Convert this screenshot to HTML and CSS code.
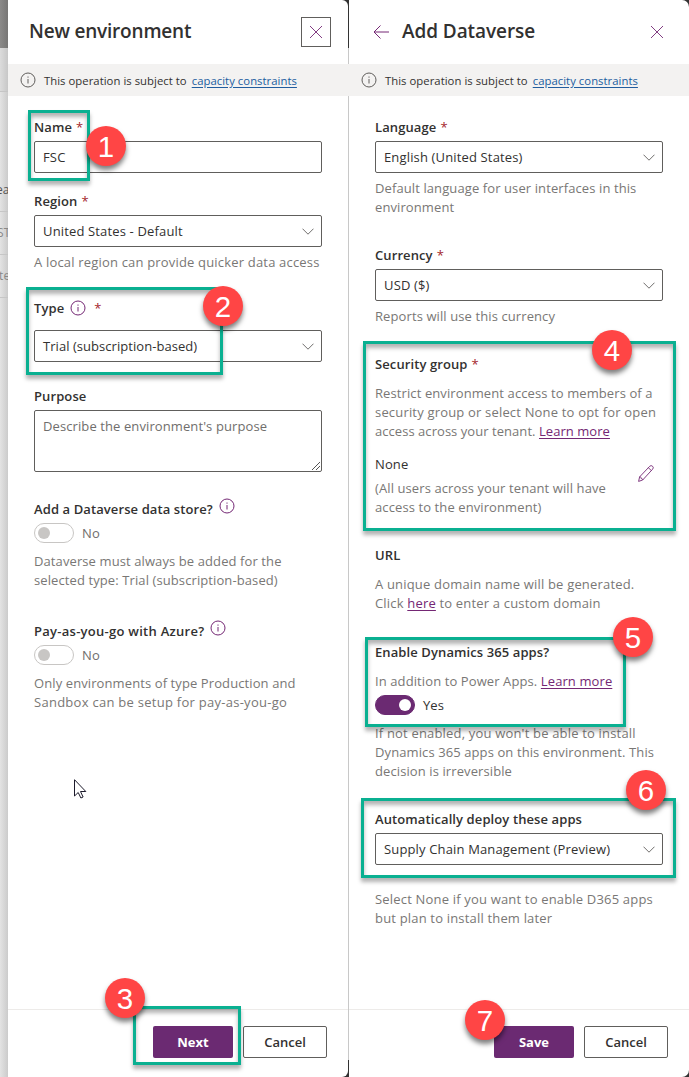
FILE: index.html
```
<!DOCTYPE html>
<html lang="en">
<head>
<meta charset="utf-8">
<title>New environment</title>
<link rel="stylesheet" href="styles.css">
</head>
<body>
<svg class="defs" width="0" height="0">
  <symbol id="info" viewBox="0 0 16 16"><circle cx="8" cy="8" r="7" fill="none" stroke="currentColor"/><path d="M8 7v4.500M8 4.500v1.200" stroke="currentColor" fill="none"/></symbol>
  <symbol id="close" viewBox="0 0 14 14"><path d="M1 1l12 12M13 1L1 13" stroke="currentColor" stroke-width=".9" fill="none"/></symbol>
  <symbol id="chev" viewBox="0 0 12 7"><path d="M.5.7L6 6.2 11.5.7" stroke="currentColor" stroke-width=".9" fill="none"/></symbol>
</svg>
<div class="screen">
  <aside class="backdrop">
    <div class="topbar"></div>
    <div class="toolbar"></div>
    <div class="rows"><span class="row first">ea</span><span class="row">ST</span><span class="row last">te</span></div>
  </aside>

  <section class="panel left">
    <header class="head">
      <h1 class="title new">New environment</h1>
      <button class="close boxed"><svg width="14" height="14"><use href="#close"/></svg></button>
    </header>
    <div class="notice"><svg width="16" height="16"><use href="#info"/></svg><span class="notice-text">This operation is subject to</span><a class="capacity">capacity constraints</a></div>
    <main class="form">
      <div class="label">Name <i class="req">*</i></div>
      <div class="field"><span>FSC</span></div>
      <div class="label region">Region <i class="req">*</i></div>
      <div class="field"><span>United States - Default</span><svg width="12" height="7"><use href="#chev"/></svg></div>
      <p class="hint h-local wide">A local region can provide quicker data access</p>
      <div class="label type">Type <svg class="info" width="16" height="16"><use href="#info"/></svg><i class="req far">*</i></div>
      <div class="field"><span class="snug">Trial (subscription-based)</span><svg width="12" height="7"><use href="#chev"/></svg></div>
      <div class="label purpose">Purpose</div>
      <div class="area"><span>Describe the environment's purpose</span><svg class="grip" width="8" height="8"><path d="M0 8L8 0M4 8l4-4" stroke="#555" fill="none"/></svg></div>
      <div class="label store"><span>Add a Dataverse data store?</span><svg class="info up" width="16" height="16"><use href="#info"/></svg></div>
      <div class="toggle-row"><span class="toggle"></span><span class="off-text">No</span></div>
      <p class="hint after-toggle">Dataverse must always be added for the<br>selected type: Trial (subscription-based)</p>
      <div class="label azure"><span class="loose">Pay-as-you-go with Azure?</span><svg class="info up" width="16" height="16"><use href="#info"/></svg></div>
      <div class="toggle-row"><span class="toggle"></span><span class="off-text">No</span></div>
      <p class="hint after-toggle">Only environments of type Production and<br><span class="loose">Sandbox can be setup for pay-as-you-go</span></p>
    </main>
    <footer class="foot"><button class="btn primary">Next</button><button class="btn">Cancel</button></footer>
  </section>

  <section class="panel right">
    <header class="head">
      <svg class="back" width="16" height="14" viewBox="0 0 16 14"><path d="M16 7H1M7.500.5L1 7l6.500 6.500" stroke="currentColor" fill="none"/></svg>
      <h1 class="title add">Add Dataverse</h1>
      <button class="close"><svg width="14" height="14"><use href="#close"/></svg></button>
    </header>
    <div class="notice"><svg width="16" height="16"><use href="#info"/></svg><span class="notice-text">This operation is subject to</span><a class="capacity">capacity constraints</a></div>
    <main class="form">
      <div class="label">Language <i class="req">*</i></div>
      <div class="field"><span>English (United States)</span><svg width="12" height="7"><use href="#chev"/></svg></div>
      <p class="hint h-lang">Default language for user interfaces in this<br>environment</p>
      <div class="label currency">Currency <i class="req">*</i></div>
      <div class="field"><span>USD ($)</span><svg width="12" height="7"><use href="#chev"/></svg></div>
      <p class="hint h-lang">Reports will use this currency</p>
      <div class="label security">Security group <i class="req">*</i></div>
      <p class="hint intro">Restrict environment access to members of a<br><span class="wide">security group or select None to opt for open</span><br><span class="snug">access across your tenant. <a>Learn more</a></span></p>
      <div class="group">
        <div><p class="none">None</p><p class="hint all">(All users across your tenant will have<br>access to the environment)</p></div>
        <svg class="pencil" width="16" height="17" viewBox="0 0 16 17"><path d="M.6 16.400l1-4.500L11.700 1.300a1.900 1.900 0 0 1 2.900 2.900L4.700 15zM10.400 2.700l2.900 2.900M1.600 11.900c1.500 0 1.700.7 1.600 1.700 1 0 1.500.3 1.500 1.400" fill="none" stroke="currentColor" stroke-width=".9"/></svg>
      </div>
      <div class="label url">URL</div>
      <p class="hint intro wide">A unique domain name will be generated.<br>Click <a>here</a> to enter a custom domain</p>
      <div class="label dynamics">Enable Dynamics 365 apps?</div>
      <p class="hint intro">In addition to Power Apps. <a>Learn more</a></p>
      <div class="toggle-row"><span class="toggle on"></span><span class="snug">Yes</span></div>
      <p class="hint irreversible"><span class="wide">If not enabled, you won't be able to install</span><br>Dynamics 365 apps on this environment. This<br>decision is irreversible</p>
      <div class="label deploy">Automatically deploy these apps</div>
      <div class="field"><span>Supply Chain Management (Preview)</span><svg width="12" height="7"><use href="#chev"/></svg></div>
      <p class="hint later wide">Select None if you want to enable D365 apps<br>but plan to install them later</p>
    </main>
    <footer class="foot"><button class="btn primary">Save</button><button class="btn">Cancel</button></footer>
  </section>

  <div class="mark m1"></div><div class="mark m2"></div><div class="mark m3"></div>
  <div class="mark m4"></div><div class="mark m5"></div><div class="mark m6"></div>
  <b class="step s1">1</b><b class="step s2">2</b><b class="step s3">3</b><b class="step s4">4</b><b class="step s5">5</b><b class="step s6">6</b><b class="step s7">7</b>
  <svg class="cursor" width="13" height="20" viewBox="0 0 13 20"><path d="M.5.700V17l3.700-3.500 2.700 5.500 2.200-1-2.600-5.500h5.300z" fill="#fff" stroke="#1c1a2b"/></svg>
</div>
</body>
</html>
```
FILE: styles.css
```
* { box-sizing: border-box; }
body { margin: 0; font: 13px/19px "Open Sans", sans-serif; letter-spacing: .1px; color: #323130; }
h1, p { margin: 0; }
button { font: inherit; color: inherit; padding: 0; }
.defs { position: absolute; }
.screen { position: relative; display: flex; width: 689px; height: 1077px; overflow: hidden; background: linear-gradient(#333 0 48px, #c8c8c8 48px 1060px, #333 1060px); }
.backdrop { width: 8px; overflow: hidden; background: linear-gradient(90deg, #e3e3e3, #cbcbcb); color: #888; }
.topbar { height: 48px; background: linear-gradient(90deg, #8b8a89, #777675); }
.toolbar { height: 44px; background: linear-gradient(90deg, #dcdcdc, #c7c7c7); border-bottom: 1px solid #c5c5c5; }
.rows { display: flex; flex-direction: column; padding-top: 77px; }
.row { height: 43px; line-height: 42px; text-indent: -3px; border-bottom: 1px solid #c6c6c6; font-size: 12px; }
.row.first { color: #555; text-indent: -4px; }
.row.last { text-indent: -1px; }
.panel { display: flex; flex-direction: column; width: 340px; background: #fff; white-space: nowrap; }
.left { border-radius: 0 6px 6px 0; }
.right { margin-left: 1px; border-radius: 0 7px 7px 0; }
.head { display: flex; align-items: center; height: 64px; padding: 0 17px 0 21px; }
.right .head { padding: 0 17px 0 24px; }
.title { flex: 1; font-size: 19px; line-height: 27px; font-weight: 600; padding-bottom: 2px; }
.new { letter-spacing: -.2px; }
.add { letter-spacing: -.08px; }
.back { margin-right: 13px; color: #742774; }
.close { display: grid; place-items: center; width: 30px; height: 30px; border: 0; background: none; color: #742774; }
.boxed { border: 1px solid #605e5c; }
.notice { display: flex; align-items: center; height: 32px; padding-left: 12px; background: #f3f2f1; font-size: 11.300px; letter-spacing: .04px; }
.notice svg { color: #605e5c; margin: 0 8px 1px 0; }
.right .notice { margin-left: -1px; padding-left: 13px; }
.notice a { color: #215d9f; margin-left: 5px; }
a { color: #742774; text-decoration: underline; text-underline-offset: 2px; }
.form { flex: 1; padding: 21px 26px 0; }
.label { display: flex; align-items: center; height: 20px; gap: 4px; margin-bottom: 4px; font-weight: 600; }
.req { color: #a4262c; font-style: normal; font-weight: 400; }
.far { margin-left: 4px; }
.info { color: #742774; margin-left: 2px; }
.up { position: relative; top: -3px; }
.field { display: flex; align-items: center; justify-content: space-between; height: 32px; padding: 0 7px 0 8px; border: 1px solid #605e5c; border-radius: 2px; letter-spacing: .15px; }
.field svg { color: #605e5c; }
.snug { letter-spacing: .05px; }
.wide { letter-spacing: .18px; }
.loose { letter-spacing: .27px; }
.area { position: relative; height: 62px; padding: 6px 8px; border: 1px solid #605e5c; border-radius: 2px; color: #706e6c; }
.grip { position: absolute; right: 1px; bottom: 1px; }
.hint { color: #797775; }
.region { margin-top: 18px; }
.h-local { margin-top: 6px; }
.type { margin: 26px 0 12px; }
.purpose { margin-top: 24px; }
.store { margin-top: 27px; }
.azure { margin-top: 31px; }
.toggle-row { display: flex; align-items: center; height: 20px; gap: 8px; }
.toggle { display: flex; align-items: center; width: 40px; height: 20px; padding: 0 3px; border: 1px solid #c8c6c4; border-radius: 10px; }
.toggle::before { content: ""; width: 12px; height: 12px; border-radius: 50%; background: #c8c6c4; }
.on { justify-content: flex-end; border-color: #6b2a72; background: #6b2a72; }
.on::before { background: #fff; }
.off-text { color: #706e6c; }
.after-toggle { margin-top: 9px; }
.h-lang { margin-top: 6px; }
.currency, .security, .deploy { margin-top: 28px; }
.security, .url, .dynamics { margin-bottom: 10px; }
.group { display: flex; justify-content: space-between; margin-top: 14px; padding-right: 9px; }
.all { margin-top: 5px; }
.pencil { margin-top: 10px; color: #742774; }
.url { margin-top: 28px; }
.dynamics { margin-top: 29px; }
.dynamics + .hint { margin-bottom: 4px; }
.irreversible { margin-top: 9px; }
.later { margin-top: 25px; }
.foot { display: flex; justify-content: flex-end; gap: 10px; height: 68px; padding: 16px 21px 0 0; border-top: 1px solid #edebe9; }
.btn { width: 84px; height: 32px; border: 1px solid #605e5c; border-radius: 2px; background: #fff; font-weight: 600; }
.primary { width: 80px; border: 0; background: #6b2a72; color: #fff; font-weight: 700; }
.mark { position: absolute; border: 3px solid #0ab091; box-shadow: 0 4px 4px rgba(0,0,0,.3), inset 0 4px 4px rgba(0,0,0,.3); }
.m1 { left: 28px; top: 110px; width: 62px; height: 71px; }
.m2 { left: 26px; top: 287px; width: 197px; height: 88px; }
.m3 { left: 133px; top: 1006px; width: 108px; height: 59px; }
.m4 { left: 363px; top: 341px; width: 313px; height: 190px; }
.m5 { left: 365px; top: 637px; width: 261px; height: 90px; }
.m6 { left: 361px; top: 798px; width: 315px; height: 80px; }
.step { position: absolute; width: 40px; height: 40px; border-radius: 50%; background: #ff4545; color: #fff; font: 400 29.500px/41px "Liberation Sans", sans-serif; text-align: center; box-shadow: 0 4px 5px rgba(0,0,0,.5); }
.s1 { left: 86px; top: 126px; }
.s2 { left: 203px; top: 286px; }
.s3 { left: 105px; top: 978px; }
.s4 { left: 592px; top: 330px; }
.s5 { left: 613px; top: 617px; }
.s6 { left: 626px; top: 770px; }
.s7 { left: 465px; top: 1000px; }
.cursor { position: absolute; left: 74px; top: 779px; }
```
